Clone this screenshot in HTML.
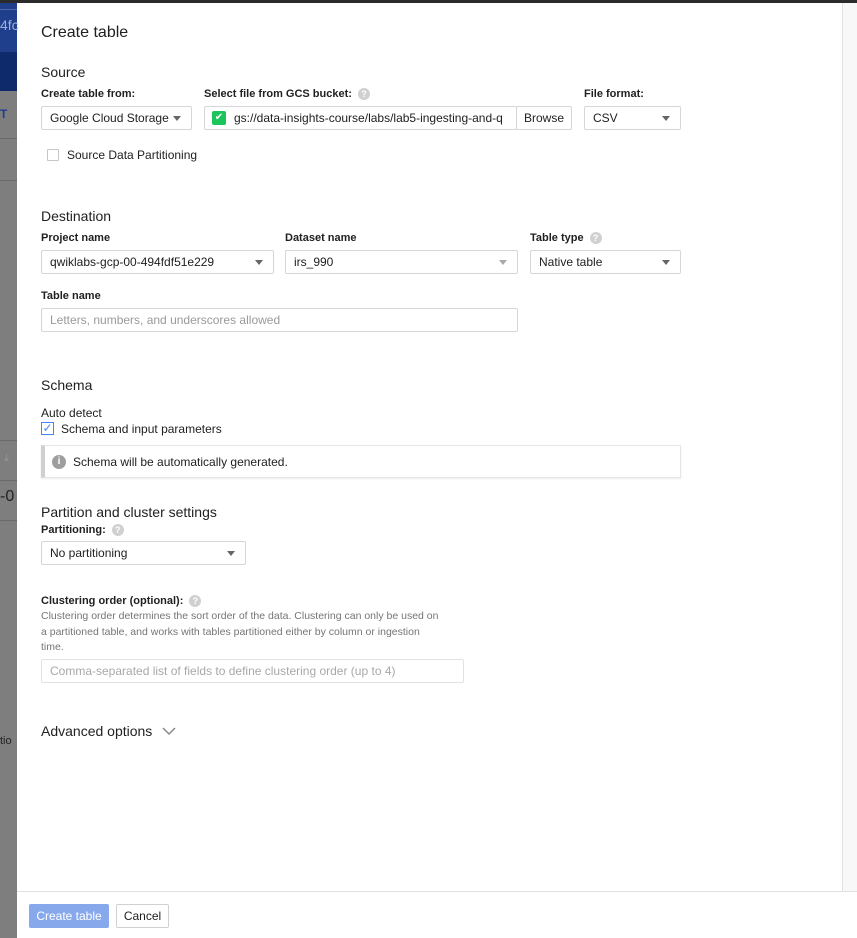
<!DOCTYPE html>
<html><head><style>
*{box-sizing:border-box;margin:0;padding:0}
body{width:857px;height:938px;position:relative;overflow:hidden;background:#fff;font-family:"Liberation Sans",sans-serif;color:#212121}
.a{position:absolute;white-space:nowrap}
.h2{font-size:14px;color:#212121}
.lbl{font-size:11px;font-weight:bold;color:#212121}
.box{position:absolute;border:1px solid #d6d6d6;background:#fff;font-size:12px;padding-left:8px;display:flex;align-items:center;border-radius:2px}
.arr{position:absolute;right:10px;top:50%;margin-top:-2px;width:0;height:0;border-left:4px solid transparent;border-right:4px solid transparent;border-top:5px solid #666}
.q{display:inline-block;width:12px;height:12px;border-radius:50%;background:#d0d0d0;color:#fff;font-size:9px;font-weight:bold;text-align:center;line-height:12px;vertical-align:middle;margin-left:6px}
</style></head><body>
<div class="a" style="left:0;top:0;width:17px;height:938px;background:#7e7e7e"></div>
<div class="a" style="left:0;top:0;width:17px;height:52px;background:#1f3e8c"></div>
<div class="a" style="left:0;top:9px;width:17px;height:1px;background:#4d67a7"></div>
<div class="a" style="left:0;top:52px;width:17px;height:39px;background:#0f2a6b"></div>
<div class="a" style="left:0;top:17px;font-size:14px;color:#9fb0d8">4fc</div>
<div class="a" style="left:0;top:107px;font-size:12px;color:#1f3e8c;font-weight:bold">T</div>
<div class="a" style="left:0;top:138px;width:17px;height:1px;background:#6a6a6a"></div>
<div class="a" style="left:0;top:180px;width:17px;height:1px;background:#6a6a6a"></div>
<div class="a" style="left:0;top:440px;width:17px;height:1px;background:#6a6a6a"></div>
<div class="a" style="left:4px;top:452px;font-size:11px;color:#999">⤓</div>
<div class="a" style="left:0;top:480px;width:17px;height:1px;background:#6a6a6a"></div>
<div class="a" style="left:0;top:488px;font-size:16px;color:#222">-0</div>
<div class="a" style="left:0;top:520px;width:17px;height:1px;background:#6a6a6a"></div>
<div class="a" style="left:0;top:735px;font-size:11px;color:#222">tio</div>
<div class="a" style="left:0;top:0;width:857px;height:3px;background:#2b2b2b"></div>
<div class="a" style="left:842px;top:3px;width:15px;height:888px;background:#f8f8f8;border-left:1px solid #e2e2e2"></div>

<div class="a" style="left:41px;top:24px;font-size:16px">Create table</div>
<div class="a h2" style="left:41px;top:64px">Source</div>
<div class="a lbl" style="left:41px;top:88px">Create table from:</div>
<div class="box" style="left:41px;top:106px;width:151px;height:24px">Google Cloud Storage<span class="arr"></span></div>
<div class="a lbl" style="left:204px;top:88px">Select file from GCS bucket:<span class="q">?</span></div>
<div class="box" style="left:204px;top:106px;width:313px;height:24px;padding-left:0"><span style="display:inline-block;width:14px;height:14px;background:#1cc55a;border-radius:2px;margin:0 8px 0 7px;color:#fff;font-size:10px;text-align:center;line-height:14px">✔</span><span style="overflow:hidden">gs://data-insights-course/labs/lab5-ingesting-and-q</span></div>
<div class="box" style="left:516px;top:106px;width:56px;height:24px;padding-left:7px">Browse</div>
<div class="a lbl" style="left:584px;top:88px">File format:</div>
<div class="box" style="left:584px;top:106px;width:97px;height:24px">CSV<span class="arr"></span></div>
<div class="a" style="left:47px;top:149px;width:12px;height:12px;border:1px solid #c6c6c6;border-radius:1px"></div>
<div class="a" style="left:67px;top:148px;font-size:12px">Source Data Partitioning</div>

<div class="a h2" style="left:41px;top:208px">Destination</div>
<div class="a lbl" style="left:41px;top:232px">Project name</div>
<div class="box" style="left:41px;top:250px;width:233px;height:24px">qwiklabs-gcp-00-494fdf51e229<span class="arr"></span></div>
<div class="a lbl" style="left:285px;top:232px">Dataset name</div>
<div class="box" style="left:285px;top:250px;width:233px;height:24px">irs_990<span class="arr" style="border-top-color:#aaa"></span></div>
<div class="a lbl" style="left:530px;top:232px">Table type<span class="q">?</span></div>
<div class="box" style="left:530px;top:250px;width:151px;height:24px">Native table<span class="arr"></span></div>
<div class="a lbl" style="left:41px;top:290px">Table name</div>
<div class="box" style="left:41px;top:308px;width:477px;height:24px;color:#9a9a9a">Letters, numbers, and underscores allowed</div>

<div class="a h2" style="left:41px;top:377px">Schema</div>
<div class="a" style="left:41px;top:406px;font-size:12px">Auto detect</div>
<div class="a" style="left:41px;top:422px;width:13px;height:13px;border:1px solid #4285f4;color:#4285f4;font-size:12px;line-height:11px;text-align:center">✓</div>
<div class="a" style="left:61px;top:422px;font-size:12px">Schema and input parameters</div>
<div class="a" style="left:41px;top:445px;width:640px;height:33px;border:1px solid #e6e6e6;border-left:4px solid #d0d0d0;box-shadow:0 1px 2px rgba(0,0,0,.08)"></div>
<div class="a" style="left:52px;top:455px;width:14px;height:14px;border-radius:50%;background:#9e9e9e;color:#fff;font-size:10px;font-weight:bold;text-align:center;line-height:14px">i</div>
<div class="a" style="left:73px;top:455px;font-size:12px">Schema will be automatically generated.</div>

<div class="a h2" style="left:41px;top:504px">Partition and cluster settings</div>
<div class="a lbl" style="left:41px;top:524px">Partitioning:<span class="q">?</span></div>
<div class="box" style="left:41px;top:541px;width:205px;height:24px">No partitioning<span class="arr"></span></div>
<div class="a lbl" style="left:41px;top:595px">Clustering order (optional):<span class="q">?</span></div>
<div class="a" style="left:41px;top:609px;font-size:10.5px;color:#757575;line-height:15.5px">Clustering order determines the sort order of the data. Clustering can only be used on<br>a partitioned table, and works with tables partitioned either by column or ingestion<br>time.</div>
<div class="box" style="left:41px;top:659px;width:423px;height:24px;color:#a8a8a8;border-color:#e2e2e2">Comma-separated list of fields to define clustering order (up to 4)</div>

<div class="a" style="left:41px;top:723px;font-size:14px">Advanced options</div>
<svg class="a" style="left:162px;top:727px" width="14" height="9"><path d="M1 1l6 6 6-6" fill="none" stroke="#888" stroke-width="1.5"/></svg>

<div class="a" style="left:17px;top:891px;width:840px;height:1px;background:#e0e0e0"></div>
<div class="a" style="left:29px;top:904px;width:80px;height:24px;background:#87a9ec;border-radius:2px;color:#fff;font-size:12px;text-align:center;line-height:24px">Create table</div>
<div class="a" style="left:116px;top:904px;width:53px;height:24px;border:1px solid #d0d0d0;border-radius:2px;font-size:12px;text-align:center;line-height:22px">Cancel</div>
</body></html>
